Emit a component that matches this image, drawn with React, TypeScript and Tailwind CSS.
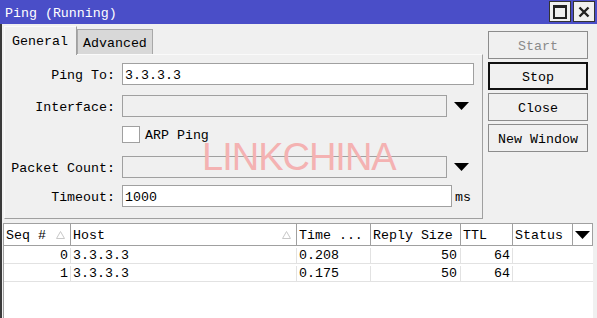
import React from "react";

const mono = "font-['Liberation_Mono','DejaVu_Sans_Mono',monospace] text-[13.3px] leading-none";

function DownArrow() {
  return (
    <svg width="15" height="8" viewBox="0 0 15 8" aria-hidden="true">
      <polygon points="0,0 15,0 7.5,8" fill="#000" />
    </svg>
  );
}

function SortMark() {
  return (
    <svg width="9" height="8" viewBox="0 0 9 8" aria-hidden="true">
      <polygon points="4.5,0.5 8.5,7.5 0.5,7.5" fill="none" stroke="#c8c8c8" strokeWidth="1" />
    </svg>
  );
}

function Label({ text }: { text: string }) {
  return <div className="w-[111px] shrink-0 pr-[1px] pt-[3px] text-right">{text}</div>;
}

const buttons = [
  { label: "Start", cls: "border border-[#8c8c8c] text-[#8a8a8a]" },
  { label: "Stop", cls: "border-2 border-[#111]" },
  { label: "Close", cls: "border border-[#8c8c8c]" },
  { label: "New Window", cls: "border border-[#8c8c8c]" },
];

const cols = [
  { title: "Seq #", w: "w-[67px]", sort: true },
  { title: "Host", w: "w-[226px]", sort: true },
  { title: "Time ...", w: "w-[74px]", sort: false },
  { title: "Reply Size", w: "w-[90px]", sort: false },
  { title: "TTL", w: "w-[52px]", sort: false },
  { title: "Status", w: "w-[60px]", sort: false },
];

const rows = [
  { seq: "0", host: "3.3.3.3", time: "0.208", size: "50", ttl: "64" },
  { seq: "1", host: "3.3.3.3", time: "0.175", size: "50", ttl: "64" },
];

export default function App() {
  return (
    <div className={`relative h-[318px] w-[597px] overflow-hidden bg-[#f0f0f0] text-black ${mono}`}>
      {/* Title bar */}
      <div className="flex h-[24px] items-center bg-[#4a4ec8] pl-[5px] text-white">
        <span className="pt-[3px]">Ping (Running)</span>
        <div className="ml-auto flex gap-[2px] self-start pr-[2px] pt-[1px]">
          <div className="flex h-[21px] w-[22px] items-center justify-center border border-[#333] bg-[#f0f0f0]">
            <div className="h-[14px] w-[14px] border-2 border-t-[3px] border-[#222]" />
          </div>
          <div className="flex h-[21px] w-[22px] items-center justify-center border border-[#333] bg-[#f0f0f0]">
            <svg width="12" height="12" viewBox="0 0 12 12" aria-hidden="true">
              <path d="M1.5 1.5 L10.5 10.5 M10.5 1.5 L1.5 10.5" stroke="#222" strokeWidth="2.4" />
            </svg>
          </div>
        </div>
      </div>

      <div className="flex h-[294px] flex-col border-l-2 border-[#3a3a3a]">
        {/* Top section */}
        <div className="flex">
          <div className="ml-[2px] w-[479px]">
            {/* Tabs */}
            <div className="flex h-[30px] items-end">
              <div className="relative -mb-[1px] flex h-[29px] w-[73px] items-center border-l border-t border-r border-[#fafafa] border-r-[#a0a0a0] bg-[#f0f0f0] pl-[7px] pt-[2px]">
                General
              </div>
              <div className="flex h-[25px] w-[76px] items-center border border-b-0 border-[#a8a8a8] bg-[#d8d8d8] pl-[5px] pt-[4px]">
                Advanced
              </div>
            </div>
            {/* Panel */}
            <div className="h-[165px] border border-t-[#fafafa] border-l-[#fafafa] border-r-[#a0a0a0] border-b-[#a0a0a0]">
              <div className="mt-[8px] flex h-[22px] items-center">
                <Label text="Ping To:" />
                <div className="ml-[6px] flex h-[22px] w-[352px] items-center border border-[#a0a0a0] bg-white pl-[2px] pt-[3px]">3.3.3.3</div>
              </div>
              <div className="mt-[10px] flex h-[22px] items-center">
                <Label text="Interface:" />
                <div className="ml-[6px] h-[22px] w-[325px] border border-[#a0a0a0] bg-[#f0f0f0]" />
                <div className="ml-[7px] flex"><DownArrow /></div>
              </div>
              <div className="mt-[9px] flex h-[17px] items-center">
                <div className="ml-[117px] h-[17px] w-[18px] border border-[#a0a0a0] bg-white" />
                <span className="ml-[5px] pt-[3px]">ARP Ping</span>
              </div>
              <div className="mt-[13px] flex h-[22px] items-center">
                <Label text="Packet Count:" />
                <div className="ml-[6px] h-[22px] w-[325px] border border-[#a0a0a0] bg-[#f0f0f0]" />
                <div className="ml-[7px] flex"><DownArrow /></div>
              </div>
              <div className="mt-[7px] flex h-[22px] items-center">
                <Label text="Timeout:" />
                <div className="ml-[6px] flex h-[22px] w-[330px] items-center border border-[#a0a0a0] bg-white pl-[2px] pt-[3px]">1000</div>
                <span className="ml-[3px] pt-[3px]">ms</span>
              </div>
            </div>
          </div>

          {/* Buttons */}
          <div className="ml-[5px] mt-[7px] flex w-[100px] flex-col gap-[3px]">
            {buttons.map((b) => (
              <div key={b.label} className={`flex h-[28px] items-center justify-center bg-[#f0f0f0] pt-[4px] ${b.cls}`}>
                {b.label}
              </div>
            ))}
          </div>
        </div>

        {/* Table */}
        <div className="ml-[1px] mt-[4px] flex w-[590px] flex-1 flex-col border-l border-t border-[#a0a0a0] bg-white">
          <div className="flex h-[22px] border-b border-[#a0a0a0]">
            {cols.map((c) => (
              <div key={c.title} className={`flex items-center border-r border-[#a0a0a0] pl-[2px] pr-[5px] ${c.w}`}>
                <span className="pt-[3px]">{c.title}</span>
                {c.sort && <span className="ml-auto flex"><SortMark /></span>}
              </div>
            ))}
            <div className="flex flex-1 items-center justify-center border-r border-[#a0a0a0]">
              <DownArrow />
            </div>
          </div>
          {rows.map((r) => (
            <div key={r.seq} className="flex h-[18px] border-b border-[#e2e2e2] pt-[2px]">
              <div className="flex w-[67px] items-center justify-end border-r border-[#e2e2e2] pr-[2px]">{r.seq}</div>
              <div className="flex w-[226px] items-center border-r border-[#e2e2e2] pl-[2px]">{r.host}</div>
              <div className="flex w-[74px] items-center border-r border-[#e2e2e2] pl-[2px]">{r.time}</div>
              <div className="flex w-[90px] items-center justify-end border-r border-[#e2e2e2] pr-[3px]">{r.size}</div>
              <div className="flex w-[52px] items-center justify-end border-r border-[#e2e2e2] pr-[2px]">{r.ttl}</div>
              <div className="w-[60px]" />
            </div>
          ))}
        </div>
      </div>

      {/* Watermark */}
      <div className="pointer-events-none absolute left-[202px] top-[138px] font-['Liberation_Sans',sans-serif] text-[38px] leading-none tracking-[-1px] text-[#f4b2b2]">
        LINKCHINA
      </div>
    </div>
  );
}
